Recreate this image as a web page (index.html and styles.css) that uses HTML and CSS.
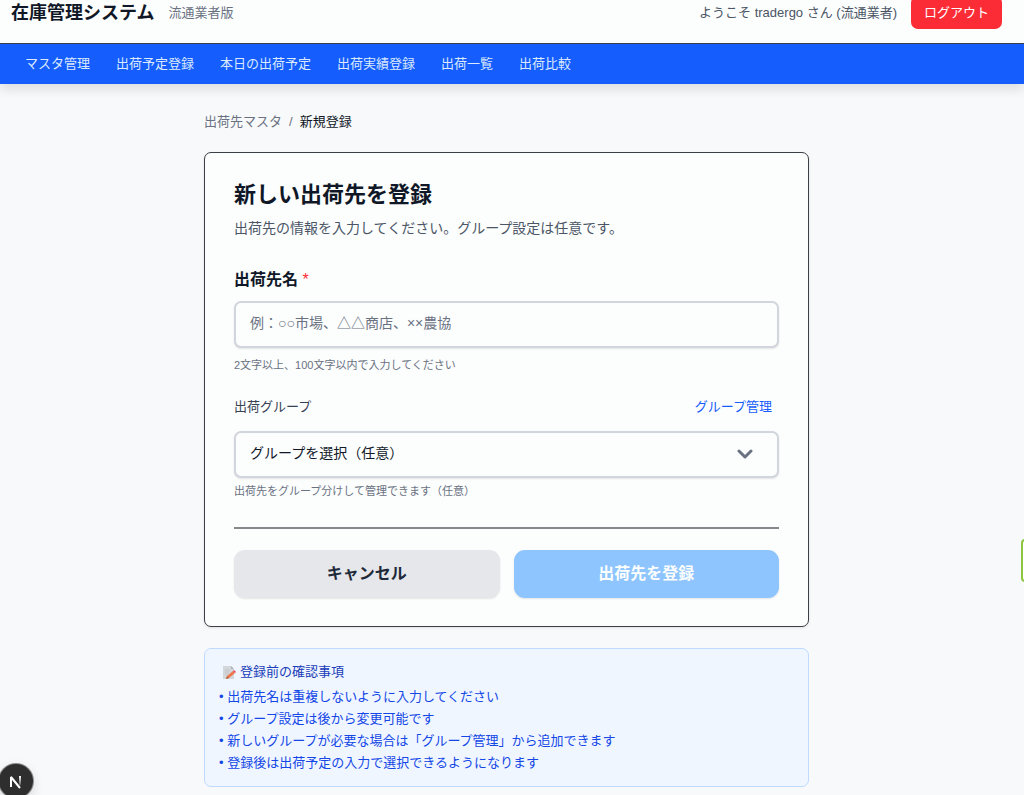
FILE: index.html
```html
<!DOCTYPE html>
<html lang="ja">
<head>
    <meta charset="UTF-8">
    <meta name="viewport" content="width=device-width, initial-scale=1.0">
    <title>在庫管理システム - 出荷先の新規登録</title>
    <link rel="stylesheet" href="styles.css">
</head>
<body>

    <header class="header">
        <div class="brand">
            <h1>在庫管理システム</h1>
            <span class="edition">流通業者版</span>
        </div>
        <div class="user">
            <span>ようこそ tradergo さん (流通業者)</span>
            <button type="button" class="logout">ログアウト</button>
        </div>
    </header>

    <nav class="nav">
        <a href="#">マスタ管理</a>
        <a href="#">出荷予定登録</a>
        <a href="#">本日の出荷予定</a>
        <a href="#">出荷実績登録</a>
        <a href="#">出荷一覧</a>
        <a href="#">出荷比較</a>
    </nav>

    <main class="main">
        <div class="cont">
            <div class="breadcrumb">
                <a href="#">出荷先マスタ</a>
                <span>/</span>
                <span class="current">新規登録</span>
            </div>

            <form class="card">
                <h2>新しい出荷先を登録</h2>
                <p class="lead">出荷先の情報を入力してください。グループ設定は任意です。</p>

                <label class="name-label" for="name">出荷先名 <span class="required">*</span></label>
                <input type="text" id="name" class="field" placeholder="例：○○市場、△△商店、××農協">
                <p class="help name-help">2文字以上、100文字以内で入力してください</p>

                <div class="group-row">
                    <label for="group">出荷グループ</label>
                    <a href="#">グループ管理</a>
                </div>
                <div class="select-box">
                    <select id="group" class="field">
                        <option>グループを選択（任意）</option>
                    </select>
                    <svg class="chevron" viewBox="0 0 16 10" width="16" height="10">
                        <path d="M2 2l6 6 6-6" fill="none" stroke="#6a7282" stroke-width="3" stroke-linecap="round" stroke-linejoin="round"/>
                    </svg>
                </div>
                <p class="help group-help">出荷先をグループ分けして管理できます（任意）</p>

                <div class="actions">
                    <button type="button" class="cancel">キャンセル</button>
                    <button type="submit" class="submit" disabled>出荷先を登録</button>
                </div>
            </form>

            <section class="notes">
                <h3>
                    <svg viewBox="0 0 14 14" width="14" height="14">
                        <path d="M1 1h8l3 3v10H1z" fill="#d3d6da"/>
                        <path d="M9 1v3h3z" fill="#aeb2b8"/>
                        <path d="M3 5h5M3 7h4M3 9h3" stroke="#c2c5ca" stroke-width="1"/>
                        <path d="M5 11l6-5 2 2-6 5-3 1z" fill="#f0764d"/>
                        <path d="M11 6l1-1 2 2-1 1z" fill="#e8475a"/>
                        <path d="M4 14l1-3 2 2z" fill="#a9683f"/>
                    </svg>
                    登録前の確認事項
                </h3>
                <ul>
                    <li>• 出荷先名は重複しないように入力してください</li>
                    <li>• グループ設定は後から変更可能です</li>
                    <li>• 新しいグループが必要な場合は「グループ管理」から追加できます</li>
                    <li>• 登録後は出荷予定の入力で選択できるようになります</li>
                </ul>
            </section>
        </div>
    </main>

    <button type="button" class="dev-badge" aria-label="開発ツール">
        <svg viewBox="0 0 34 34" width="34" height="34">
            <defs>
                <linearGradient id="fade" x1="0" y1="0" x2="0" y2="1">
                    <stop offset="0" stop-color="#fff"/>
                    <stop offset="1" stop-color="#fff" stop-opacity="0.2"/>
                </linearGradient>
            </defs>
            <path d="M12 23V13l9 11" fill="none" stroke="#fff" stroke-width="2" stroke-linejoin="bevel"/>
            <rect x="20" y="12" width="2" height="9" fill="url(#fade)"/>
        </svg>
    </button>
    <div class="side-tab"></div>

</body>
</html>
```
FILE: styles.css
```css
* {
    margin: 0;
    padding: 0;
    box-sizing: border-box;
}

body {
    font-family: "Liberation Sans", "Noto Sans CJK JP", sans-serif;
    font-size: 13px;
    line-height: 18px;
    background-color: #f8f9fb;
    color: #101828;
    overflow: hidden;
}

button, input, select {
    font-family: inherit;
}

a {
    text-decoration: none;
}

/* header */
.header {
    display: flex;
    justify-content: space-between;
    align-items: center;
    margin-top: -4px;
    padding: 0 22px 14px 11px;
    background: #fcfdfd;
    border-bottom: 1px solid #3a3f48;
}

.brand {
    display: flex;
    align-items: center;
    gap: 14px;
}

.brand h1 {
    font-size: 18px;
    line-height: 24px;
}

.edition {
    color: #6a7282;
}

.user {
    display: flex;
    align-items: center;
    gap: 14px;
    color: #4a5565;
}

.logout {
    padding: 7px 13px;
    border: none;
    border-radius: 7px;
    background: #fb2c36;
    color: #fff;
    font-size: 13px;
    line-height: 19px;
    cursor: pointer;
}

.nav {
    display: flex;
    gap: 26px;
    padding: 11px 25px;
    background: #155dfc;
    box-shadow: 0 6px 10px rgba(0, 0, 0, 0.1);
}

.nav a {
    color: #dbeafe;
}

/* content */
.main {
    padding: 29px 25px 8px 14px;
}

.cont {
    max-width: 605px;
    margin: 0 auto;
}

.breadcrumb {
    display: flex;
    gap: 7px;
    margin-bottom: 21px;
    color: #6a7282;
}

.breadcrumb a {
    color: #6a7282;
}

.breadcrumb .current {
    color: #101828;
}

.card {
    padding: 28px 29px;
    border: 1px solid #3a3f48;
    border-radius: 7px;
    background: #fcfdfd;
    box-shadow: 0 1px 3px rgba(0, 0, 0, 0.1);
}

.card h2 {
    font-size: 22px;
    line-height: 28px;
}

.lead {
    margin: 7px 0 28px;
    font-size: 14px;
    line-height: 24px;
    color: #4a5565;
}

.name-label {
    display: block;
    margin-bottom: 9px;
    font-size: 16px;
    line-height: 24px;
    font-weight: bold;
}

.required {
    color: #fb2c36;
    font-weight: normal;
}

.field {
    display: block;
    width: 100%;
    height: 47px;
    padding: 0 14px 3px;
    border: 2px solid #d1d5dc;
    border-radius: 7px;
    background: #fcfdfd;
    color: #101828;
    font-size: 14px;
    box-shadow: 0 1px 2px rgba(0, 0, 0, 0.1);
}

.field::placeholder {
    color: #6a7282;
}

.help {
    font-size: 11px;
    line-height: 16px;
    color: #6a7282;
}

.name-help {
    margin: 9px 0 25px;
}

.group-row {
    display: flex;
    justify-content: space-between;
    margin-bottom: 15px;
    padding-right: 7px;
    color: #364153;
}

.group-row a {
    color: #155dfc;
}

.select-box {
    position: relative;
}

.select-box select {
    appearance: none;
}

.chevron {
    position: absolute;
    top: 18px;
    right: 26px;
    pointer-events: none;
}

.group-help {
    margin: 5px 0 28px;
}

.actions {
    display: flex;
    gap: 14px;
    padding-top: 21px;
    border-top: 2px solid #86888c;
}

.actions button {
    flex: 1;
    padding: 12px;
    border: none;
    border-radius: 11px;
    font-size: 16px;
    line-height: 24px;
    font-weight: bold;
    box-shadow: 0 1px 2px rgba(0, 0, 0, 0.1);
}

.cancel {
    background: #e5e7eb;
    color: #1e2939;
}

.submit {
    background: #8ec5ff;
    color: #fcfdfd;
}

.notes {
    margin-top: 21px;
    padding: 14px;
    border: 1px solid #bedbff;
    border-radius: 7px;
    background: #eff6ff;
}

.notes h3 {
    display: flex;
    align-items: center;
    gap: 4px;
    margin-bottom: 7px;
    padding-left: 3px;
    font-size: 13px;
    font-weight: normal;
    color: #193cb8;
}

.notes ul {
    display: grid;
    gap: 4px;
    list-style: none;
    color: #1447e6;
}

/* floating items on the window edges */
.dev-badge {
    position: fixed;
    left: -1px;
    bottom: -3px;
    width: 34px;
    height: 34px;
    border: none;
    border-radius: 50%;
    background: #2e2e2e;
    box-shadow: 0 0 0 1px #8a8a8a, 0 4px 12px rgba(0, 0, 0, 0.15);
}

.side-tab {
    position: fixed;
    right: -6px;
    top: 539px;
    width: 9px;
    height: 43px;
    border: 2px solid #8cc63f;
    border-radius: 4px;
    background: #fff;
}
```
